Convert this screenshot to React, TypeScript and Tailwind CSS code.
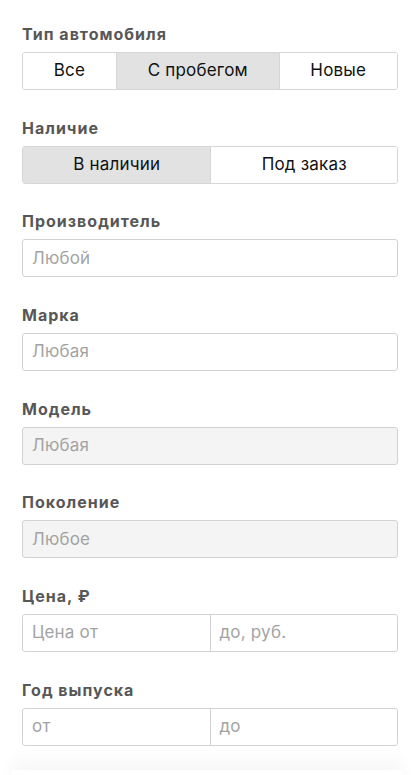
import React from "react";

const font = { fontFamily: "Inter, 'Liberation Sans', Arial, sans-serif" };

function Label({ children }: { children: React.ReactNode }) {
  return (
    <div className="h-[20px] leading-[20px] mb-[8px] text-[16px] font-bold tracking-[1px] text-[#575757]">
      {children}
    </div>
  );
}

function Segmented({ items, active }: { items: string[]; active: number }) {
  return (
    <div className="flex h-[38px] rounded-[3px] border border-[#d6d6d6] overflow-hidden">
      {items.map((it, i) => (
        <div
          key={it}
          className={
            "flex-auto flex items-center justify-center text-[17px] text-[#111111] tracking-[0.2px] " +
            (i > 0 ? "border-l border-[#d6d6d6] " : "") +
            (i === active ? "bg-[#e2e2e2]" : "bg-white")
          }
        >
          {it}
        </div>
      ))}
    </div>
  );
}

function Input({ placeholder, disabled }: { placeholder: string; disabled?: boolean }) {
  return (
    <div
      className={
        "flex items-center h-[38px] rounded-[3px] border border-[#d2d2d2] px-[9px] text-[17px] text-[#a3a3a3] tracking-[0.2px] " +
        (disabled ? "bg-[#f4f4f4]" : "bg-white")
      }
    >
      {placeholder}
    </div>
  );
}

function Range({ a, b }: { a: string; b: string }) {
  return (
    <div className="flex h-[38px] rounded-[3px] border border-[#d2d2d2] text-[17px] text-[#a3a3a3] tracking-[0.2px] overflow-hidden">
      <div className="flex-1 flex items-center px-[9px]">{a}</div>
      <div className="flex-1 flex items-center px-[9px] border-l border-[#d2d2d2]">{b}</div>
    </div>
  );
}

export default function App() {
  return (
    <div className="bg-white min-h-[775px]" style={font}>
      <div className="pt-[24px] pl-[22px] pr-[16px] flex flex-col gap-[27.7px]">
        <div>
          <Label>Тип автомобиля</Label>
          <Segmented items={["Все", "С пробегом", "Новые"]} active={1} />
        </div>
        <div>
          <Label>Наличие</Label>
          <Segmented items={["В наличии", "Под заказ"]} active={0} />
        </div>
        <div>
          <Label>Производитель</Label>
          <Input placeholder="Любой" />
        </div>
        <div>
          <Label>Марка</Label>
          <Input placeholder="Любая" />
        </div>
        <div>
          <Label>Модель</Label>
          <Input placeholder="Любая" disabled />
        </div>
        <div>
          <Label>Поколение</Label>
          <Input placeholder="Любое" disabled />
        </div>
        <div>
          <Label>Цена, ₽</Label>
          <Range a="Цена от" b="до, руб." />
        </div>
        <div>
          <Label>Год выпуска</Label>
          <Range a="от" b="до" />
        </div>
      </div>
      <div className="mt-[24px] mx-[12px] h-[40px] bg-white shadow-[0_-10px_16px_rgba(0,0,0,0.035)]" />
    </div>
  );
}
